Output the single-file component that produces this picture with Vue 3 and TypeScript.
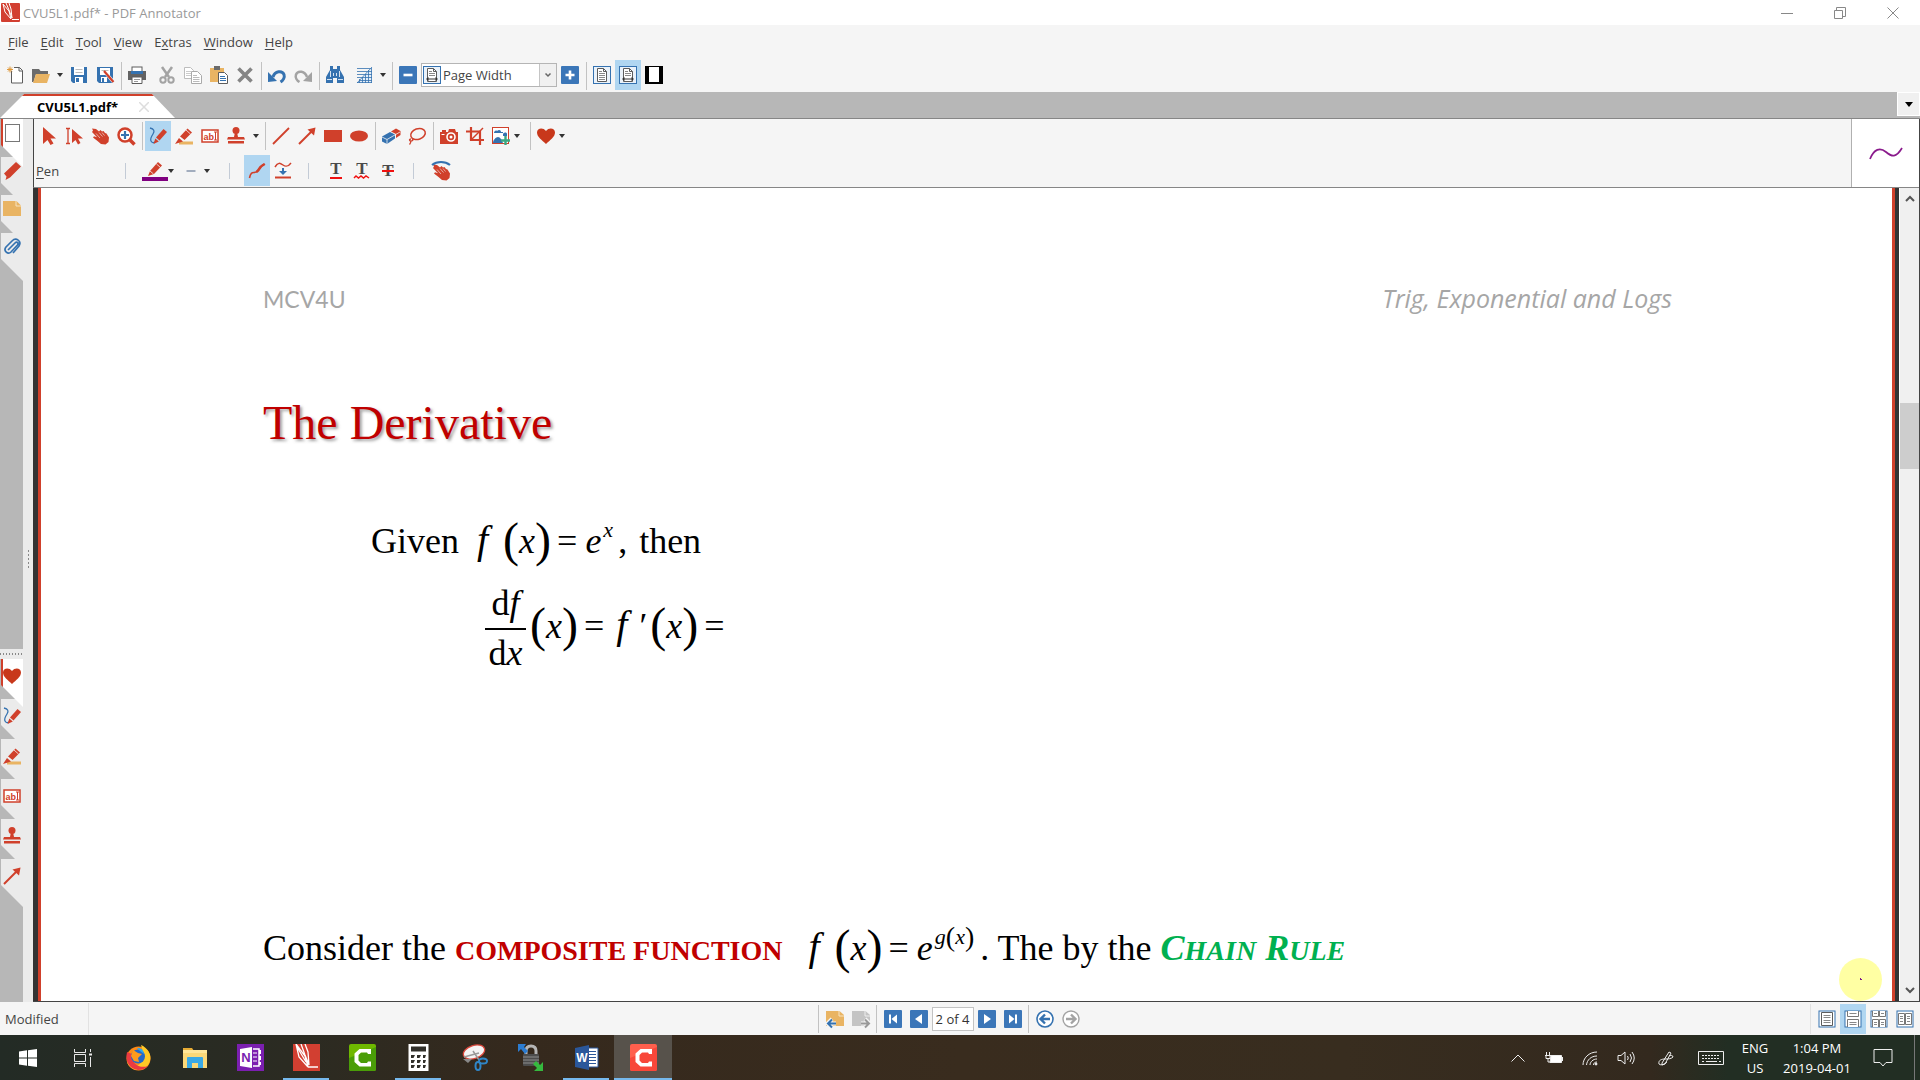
<script setup lang="ts">
import { ref } from 'vue'

interface Item {
  kind: 'btn' | 'sep' | 'caret' | 'gap'
  icon?: string
  label?: string
  active?: boolean
  tight?: boolean
  width?: number
}

const R = '#d0402b'
const B = '#3572b0'
const D = '#5c5c5c'
const G = '#a3a3a3'

const pageFrame = `<rect x="1" y="1" width="16" height="16" fill="#fff" stroke="${B}" stroke-width="1"/>`
const smallPage = `<path d="M4.500 2.500h6l3 3v10h-9z" fill="#fff" stroke="${D}"/><path d="M10.500 2.500v3h3" fill="none" stroke="${D}"/>`
const penArt = `<path d="M7.500 11L14 3.500 17 6 10 13.500z" fill="${R}"/><path d="M15 2.500l1-1 2 1.500-1 1.500z" fill="${R}"/><path d="M6.800 12l2.600 2.200L5 16z" fill="${R}"/>`
const handArt = `<path d="M1 1.500L5 2l3 2.500L9.500 3 11 4.500 12.500 4l1.500 2 1.500.5 2.500 4-.5 4.500-3 2.500-4.500-.5L6.500 14 2 10.500l1-1.200 3 1L1 5l1-1.500z" fill="${R}"/><path d="M8 5.500l3.500 4M11 5.500l2.500 3M5 6.500l4 4.500" stroke="#f5f5f5" stroke-width=".6"/>`

const icons: Record<string, string> = {
  newdoc: `<path d="M5.500 5v12h11V4.500l-3-3H8" fill="#fff" stroke="${D}"/><path d="M13 1.500V5h3.500" fill="none" stroke="${D}"/><path d="M4 .5v6M1 3.500h6M2 1.500l4 4M6 1.500l-4 4" stroke="#e0993b"/>`,
  open: `<path d="M0 3h7l1.500 2H16v3H4L1.500 16H0z" fill="#6b6b6b"/><path d="M4 8h14l-3 9H1z" fill="#e9b463"/>`,
  save: `<path d="M1 1h16v16H3l-2-2z" fill="${B}"/><rect x="4" y="1" width="10" height="8" fill="#fff"/><path d="M5.500 3.500h7M5.500 6.500h7" stroke="#bbb"/><rect x="5" y="11" width="8" height="6" fill="#fff"/><rect x="6" y="12" width="3" height="4" fill="${B}"/>`,
  saveas: `<path d="M1 1h16v16H3l-2-2z" fill="${B}"/><rect x="4" y="2" width="10" height="7" fill="#fff"/><path d="M5.500 4.500h7" stroke="#bbb"/><rect x="5" y="11" width="6" height="5" fill="#fff"/><rect x="6" y="12" width="2" height="4" fill="${B}"/><path d="M9 6l8.500 10" stroke="#f5f5f5" stroke-width="3.400"/><path d="M8 5l9.500 11" stroke="${R}" stroke-width="2.200"/>`,
  print: `<rect x="4" y="1" width="10" height="5" fill="#fff" stroke="${D}"/><path d="M0 5h18v9H0z" fill="#636363"/><rect x="3" y="5" width="12" height="3" fill="${B}"/><path d="M4 11h10v6.500H4z" fill="#fff" stroke="${D}"/><path d="M6 13.500h6M6 15.500h4" stroke="#999"/>`,
  cut: `<path d="M4 1l7 10M14 1L7 11" stroke="${G}" stroke-width="2.500" fill="none"/><circle cx="5" cy="14" r="2.700" fill="none" stroke="${G}" stroke-width="2"/><circle cx="13" cy="14" r="2.700" fill="none" stroke="${G}" stroke-width="2"/>`,
  copy: `<path d="M.5 1.500h6l3 3v8h-9z" fill="#fff" stroke="#bdbdbd"/><path d="M2 5.500h5M2 7.500h5M2 9.500h5" stroke="#ccc"/><path d="M7.500 5.500h6l4 4v8h-10z" fill="#fff" stroke="#aaa"/><path d="M9 9.500h4M9 11.500h6.500M9 13.500h6.500M9 15.500h6.500" stroke="#bbb"/>`,
  paste: `<rect x="0" y="2" width="14" height="14" fill="#e9b463"/><rect x="4" y="0" width="6" height="4" fill="#6b6b6b"/><path d="M8.500 6.500h6l3 3v8h-9z" fill="#fff" stroke="${D}"/><path d="M10 10.500h5M10 12.500h6M10 14.500h6" stroke="${B}"/>`,
  del: `<path d="M2.500 2.500l13 13M15.500 2.500l-13 13" stroke="#858585" stroke-width="3.600"/>`,
  undo: `<path d="M5 11c2-6 9-7 11-2.500 1 3-1 6-3.500 7.500" fill="none" stroke="${B}" stroke-width="3"/><path d="M0 6v10l9-1z" fill="${B}"/>`,
  redo: `<path d="M13 11C11 5 4 4 2 8.500c-1 3 1 6 3.500 7.500" fill="none" stroke="${G}" stroke-width="2.500"/><path d="M18 6v10l-9-1z" fill="${G}"/>`,
  find: `<path d="M4 0h3v3h4V0h3v4l4 7v6h-7v-5H7v5H0v-6l4-7z" fill="${B}"/><path d="M4.500 5v6M13.500 5v6M7.500 7v3M10.500 7v3" stroke="#fff" stroke-width=".8"/><path d="M1 13.500h5M12 13.500h5" stroke="#cfe0f0"/>`,
  grid: `<path d="M2 2.500h14M2 5.500h11M2 8.500h8M2 11.500h5" stroke="${B}" stroke-width=".8"/><path d="M17 1v16H2z" fill="#e4eef8"/><path d="M2 16.500h15M4 14.500h13M7 11.500h10M10 8.500h7M13 5.500h4M16.500 2v15M13.500 4v13M10.500 8v9M7.500 11v6M4.500 13v4M17 1L2 17" stroke="${B}" stroke-width=".8"/>`,
  minus: `<rect x="0" y="0" width="18" height="18" rx="1" fill="#3b76b8"/><path d="M4.500 9h9" stroke="#fff" stroke-width="2.600"/>`,
  plus: `<rect x="0" y="0" width="18" height="18" rx="1" fill="#3b76b8"/><path d="M4.500 9h9M9 4.500v9" stroke="#fff" stroke-width="2.600"/>`,
  pagewidth: `<rect x=".5" y=".5" width="17" height="17" fill="#eaf2fa" stroke="${B}"/>${smallPage}<path d="M6 5.500h3M6 7.500h6M6 9.500h6" stroke="#888"/><path d="M4 13h10" stroke="#333"/><path d="M3 13l2.500-2v4zM15 13l-2.500-2v4z" fill="#333"/>`,
  pagefull: `<rect x=".5" y=".5" width="17" height="17" fill="#eaf2fa" stroke="${B}"/>${smallPage}<path d="M6 5.500h3M6 7.500h6M6 9.500h6M6 11.500h6M6 13.500h6" stroke="#888"/>`,
  fullscreen: `<rect x="0" y="0" width="18" height="18" fill="#000"/><rect x="4" y="1" width="10" height="15" fill="#fff"/>`,
  cursor: `<path d="M4 0v17l4.500-4 3 5 3-1.500-3-5H17z" fill="${R}"/>`,
  textcursor: `<path d="M1 1.500h1.500l.5.500.5-.5H5M3 2v14M1 16.500h1.500l.5-.5.5.5H5" stroke="${R}" fill="none" stroke-width="1.300"/><path d="M7 2v14l3.500-3 2.500 4.500 2.500-1.500-2.500-4.500H18z" fill="${R}"/>`,
  hand: handArt,
  zoom: `<circle cx="8" cy="8" r="6.500" fill="#fff" stroke="${R}" stroke-width="2.500"/><path d="M12.500 12.500l5 5" stroke="${R}" stroke-width="3.500"/><path d="M4 8h8M8 4v8" stroke="${B}" stroke-width="2.200"/>`,
  pen: `<path d="M1 1c4 1 5 3 3 6-2 3-3 5-2 7 1 2 3 2 4 1" fill="none" stroke="${B}" stroke-width="1.300"/><path d="M7 10.500L14.500 2 18 5l-7.500 8.500z" fill="${R}"/><path d="M6.300 11.500l3.500 3L4.500 17z" fill="${R}"/>`,
  marker: `<rect x="4" y="14.500" width="14" height="3" fill="#e9b463"/><path d="M5 9.500L12.500 1.500 17 5.500 9.500 13z" fill="${R}"/><path d="M4 11l4 3.500L0 17z" fill="${R}"/><path d="M11 3l4.500 4M5 10l4 3.500" stroke="#f5f5f5" stroke-width=".8"/>`,
  textbox: `<rect x="1" y="3" width="16" height="12" fill="#fff" stroke="${R}" stroke-width="1.500"/><text x="2.500" y="12.500" font-family="Liberation Sans" font-size="9" font-weight="bold" fill="${R}">ab</text><path d="M13 5h3M13 13h3M14.500 5v8" stroke="${R}"/>`,
  stamp: `<circle cx="9" cy="3.500" r="3.500" fill="${R}"/><path d="M7.800 6h2.400l.8 4h6l1 2.500H0L1 10h6z" fill="${R}"/><rect x="1" y="14" width="16" height="2.500" fill="${R}"/>`,
  line: `<path d="M1 17L17 1" stroke="${R}" stroke-width="1.800"/>`,
  arrow: `<path d="M1 17L14 4" stroke="${R}" stroke-width="2"/><path d="M17.500.5l-1.500 8-6.500-6z" fill="${R}"/>`,
  rect: `<rect x="0" y="3" width="18" height="12" fill="${R}"/>`,
  ellipse: `<ellipse cx="9" cy="9" rx="9" ry="5.500" fill="${R}"/>`,
  eraser: `<path d="M0 9.500l8-4.500 5 2.500v4L5 17l-5-2.500z" fill="${B}"/><path d="M9 4.500l5-3L18.500 4v4L14 11V7z" fill="${R}"/><path d="M0 10l5 2.500L18 5M5 12.500V17" stroke="#f5f5f5" stroke-width=".8" fill="none"/>`,
  lasso: `<ellipse cx="10" cy="7" rx="7.500" ry="5.300" transform="rotate(-20 10 7)" fill="none" stroke="${R}" stroke-width="1.500"/><path d="M3 12c-2 0-2 2 0 2s3-2 1-2M2.500 14c1 1 0 2-1 3.500" fill="none" stroke="${R}" stroke-width="1.300"/>`,
  camera: `<path d="M0 5h2V3h4v2h2l1-3h6l1 3h2v12H0z" fill="${R}"/><circle cx="11" cy="10" r="4" fill="${R}" stroke="#fff" stroke-width="1.600"/><circle cx="11" cy="10" r="1.500" fill="#fff"/><path d="M1.500 7.500h3" stroke="#fff"/>`,
  crop: `<path d="M5 0v13h13M0 4.500h14V18" fill="none" stroke="${R}" stroke-width="2.200"/><path d="M5 13L17 1" stroke="${R}" stroke-width="1.500"/>`,
  image: `<rect x=".5" y=".5" width="16" height="16" fill="#fff" stroke="${R}"/><path d="M2 6c0-2 2-3 3-2 2-2 4-1 4 1h2v1zM1 16c0-3 3-6 5-6s4 3 5 6zM11 7c1-2 4-2 4 0v2h-4z" fill="${B}"/><path d="M13.500 9v9M9 13.500h9" stroke="#3aa882" stroke-width="2.400"/>`,
  heart: `<path d="M9 17C5 13 0 10 0 5.500 0 1 6 0 9 4c3-4 9-3 9 1.500C18 10 13 13 9 17z" fill="#c8381b"/>`,
  penline: `<path d="M2 14l2-5L12 0l4 3.500L8 12z" fill="${R}"/><path d="M4 9l3.500 3M10.500 2l4 3.500" stroke="#f5f5f5" stroke-width=".8"/>`,
  dash: `<path d="M4.500 9h9" stroke="#6b7d99" stroke-width="1.200"/>`,
  smooth: `<path d="M1.500 16C3 8 6 12 9 9.500 12 7 11 5 16 2" fill="none" stroke="${R}" stroke-width="1.600"/><path d="M9 9.500c3-2.500 2-4.500 7-7" fill="none" stroke="${R}" stroke-width="2.500" stroke-linecap="round"/>`,
  flatten: `<path d="M1 5c3-5 5-4 8-2s5 2 8-2" fill="none" stroke="${R}" stroke-width="1.500"/><path d="M8 6h2v3h3l-4 4-4-4h3z" fill="${B}"/><path d="M1 15.500h16" stroke="${R}" stroke-width="2"/>`,
  tunder: `<text x="9" y="12" text-anchor="middle" font-family="Liberation Serif" font-size="17" font-weight="bold" fill="#4a4a4a">T</text><path d="M3 16h12" stroke="#f01010" stroke-width="2"/>`,
  twave: `<text x="9" y="12" text-anchor="middle" font-family="Liberation Serif" font-size="17" font-weight="bold" fill="#4a4a4a">T</text><path d="M1 16l2-2 2.500 2L8 14l2.500 2 2.500-2 3 2" fill="none" stroke="#f01010" stroke-width="1.500"/>`,
  tstrike: `<text x="9" y="14" text-anchor="middle" font-family="Liberation Serif" font-size="17" font-weight="bold" fill="#4a4a4a">T</text><path d="M3 9h12" stroke="#f01010" stroke-width="2"/>`,
  touch: `<g transform="translate(0 1)">${handArt}</g><path d="M0 3C5-1 13-1 18 3" fill="none" stroke="${B}" stroke-width="2.200"/>`,
  pageside: `<rect x="2.500" y=".5" width="14" height="17" fill="#fff" stroke="#777"/>`,
  pencilside: `<path d="M1 11.500L13 0l5 4.500L7 15.500 2.500 18l1-3.500z" fill="${R}"/>`,
  note: `<path d="M0 1h13.500L18 5.500V16H0z" fill="#e9b463"/><path d="M13 1v5h5" fill="none" stroke="#f7e3c0"/>`,
  clip: `<path d="M5 12l7-7c2-2 4 0 2.500 2L8 14c-3 3-8-1-5-5l6-6c4-4 10 0 7 5l-6 7" fill="none" stroke="${B}" stroke-width="1.700"/>`,
  noteback: `<path d="M0 1h13.500L18 5v11H0z" fill="#e9b463"/><path d="M13 1v5h5" fill="none" stroke="#f7e3c0"/><path d="M10 13.500H3M6 9l-4.500 4.500L6 18" stroke="#f5f5f5" stroke-width="4" fill="none"/><path d="M10 13.500H2M6 9.500l-4 4 4 4" stroke="${B}" stroke-width="2" fill="none"/>`,
  notefwd: `<path d="M0 1h13.500L18 5v11H0z" fill="#c4c4c4"/><path d="M13 1v5h5" fill="none" stroke="#eee"/><path d="M9 13.500h7M13 9l4.500 4.500L13 18" stroke="#f5f5f5" stroke-width="4" fill="none"/><path d="M9 13.500h8M13 9.500l4 4-4 4" stroke="#999" stroke-width="2" fill="none"/>`,
  first: `<rect width="18" height="18" rx="1" fill="#3b76b8"/><path d="M6 4.500v9" stroke="#fff" stroke-width="2"/><path d="M13 4.500v9L7.500 9z" fill="#fff"/>`,
  prev: `<rect width="18" height="18" rx="1" fill="#3b76b8"/><path d="M12 4v10L5 9z" fill="#fff"/>`,
  next: `<rect width="18" height="18" rx="1" fill="#3b76b8"/><path d="M6 4v10l7-5z" fill="#fff"/>`,
  last: `<rect width="18" height="18" rx="1" fill="#3b76b8"/><path d="M12 4.500v9" stroke="#fff" stroke-width="2"/><path d="M5 4.500v9L10.500 9z" fill="#fff"/>`,
  back: `<circle cx="9" cy="9" r="8" fill="#fff" stroke="${B}" stroke-width="1.600"/><path d="M14 9H5M9 4.500L4.500 9 9 13.500" fill="none" stroke="${B}" stroke-width="2.400"/>`,
  forward: `<circle cx="9" cy="9" r="8" fill="#fff" stroke="${G}" stroke-width="1.400"/><path d="M4 9h9M9 4.500L13.500 9 9 13.500" fill="none" stroke="${G}" stroke-width="2.400"/>`,
  view1: `${pageFrame}<path d="M3.500 2.500h11v13h-11z" fill="#fff" stroke="${D}"/><path d="M5.500 5.500h7M5.500 7.500h7M5.500 10.500h7M5.500 12.500h7" stroke="#888"/>`,
  view2: `${pageFrame}<path d="M3.500 1v5.500h11V1M3.500 17V9.500h11V17" fill="#fff" stroke="#777"/><path d="M5.500 3.500h7M5.500 12.500h7M5.500 14.500h7" stroke="#888"/>`,
  view3: `${pageFrame}<path d="M2.500 1v5.500h6V1M9.500 1v5.500h6V1M2.500 17V9.500h6V17M9.500 17V9.500h6V17" fill="#fff" stroke="#777"/><path d="M4 3.500h3M11 3.500h3M4 12.500h3M11 12.500h3M4 14.500h3M11 14.500h3" stroke="#888"/>`,
  view4: `${pageFrame}<path d="M2.500 3.500h6v11h-6zM9.500 3.500h6v11h-6z" fill="#fff" stroke="#777"/><path d="M4 6.500h3M11 6.500h3M4 8.500h3M11 8.500h3M4 11.500h3M11 11.500h3" stroke="#888"/>`,
}

const btn = (icon: string, label: string, active = false): Item => ({ kind: 'btn', icon, label, active })
const sep: Item = { kind: 'sep' }
const caret = (label: string, tight = false): Item => ({ kind: 'caret', label, tight })
const gap = (width: number): Item => ({ kind: 'gap', width })

const fileTools: Item[] = [
  btn('newdoc', 'New'), btn('open', 'Open'), caret('Recent files'), btn('save', 'Save'), btn('saveas', 'Save as'), sep,
  btn('print', 'Print'), gap(4), btn('cut', 'Cut'), btn('copy', 'Copy'), btn('paste', 'Paste'), btn('del', 'Delete'), sep,
  btn('undo', 'Undo'), btn('redo', 'Redo'), sep,
  btn('find', 'Find'), gap(3), btn('grid', 'Grid'), caret('Grid options'), sep, btn('minus', 'Zoom out'),
]
const viewTools: Item[] = [
  btn('plus', 'Zoom in'), sep, btn('pagefull', 'Full page'), btn('pagewidth', 'Page width', true), btn('fullscreen', 'Full screen'),
]
const drawTools: Item[] = [
  btn('cursor', 'Select'), btn('textcursor', 'Select text'), btn('hand', 'Pan'), btn('zoom', 'Zoom'), sep,
  btn('pen', 'Pen', true), btn('marker', 'Marker'), btn('textbox', 'Text'), btn('stamp', 'Stamp'), caret('Stamps'), sep,
  btn('line', 'Line'), btn('arrow', 'Arrow'), btn('rect', 'Rectangle'), btn('ellipse', 'Ellipse'), sep,
  btn('eraser', 'Eraser'), btn('lasso', 'Lasso'), sep,
  btn('camera', 'Snapshot'), btn('crop', 'Crop'), btn('image', 'Insert image'), caret('Insert', true), sep,
  btn('heart', 'Favorites'), caret('Favorites list', true),
]
const penTools: Item[] = [
  gap(14), btn('penline', 'Colour'), caret('Colour list', true), btn('dash', 'Line width'), caret('Widths', true),
  gap(12), sep, gap(12), btn('smooth', 'Smooth', true), btn('flatten', 'Straighten'), gap(9), sep, gap(12),
  btn('tunder', 'Underline'), btn('twave', 'Squiggly'), btn('tstrike', 'Strike out'), gap(9), sep, gap(12), btn('touch', 'Touch'),
]
const menus = [
  ['', 'F', 'ile'], ['', 'E', 'dit'], ['', 'T', 'ool'], ['', 'V', 'iew'], ['E', 'x', 'tras'], ['', 'W', 'indow'], ['', 'H', 'elp'],
]
const upperTabs = ['pageside', 'pencilside', 'note', 'clip']
const lowerTabs = ['heart', 'pen', 'marker', 'textbox', 'stamp', 'arrow']
const viewModes: Item[] = [btn('view1', 'Single page'), btn('view2', 'Continuous', true), btn('view3', 'Two-up continuous'), btn('view4', 'Two pages')]
const navBefore: Item[] = [sep, btn('noteback', 'Previous note'), btn('notefwd', 'Next note'), sep, btn('first', 'First page'), btn('prev', 'Previous page')]
const navAfter: Item[] = [btn('next', 'Next page'), btn('last', 'Last page'), sep, btn('back', 'Back'), btn('forward', 'Forward')]

const camtasia = (a: string, b: string) =>
  `<rect width="27" height="27" rx="2" fill="${a}"/><path d="M0 14L27 3v22q0 2-2 2H2q-2 0-2-2z" fill="${b}"/><path d="M22 5v5h-3l-1-1.500h-6L9.500 11v5.500L12 19h6l1-1.500h3v5H10.500L5.500 18V9.500L10.500 5z" fill="#fff"/>`
const apps = [
  { name: 'Firefox', state: '', art: `<circle cx="13.500" cy="14.500" r="12" fill="#ff8a16"/><path d="M16 1c9 4 12 13 7 20-6 8-18 6-21-3 5 6 12 5 14 0 3-6 2-11 0-17z" fill="#ffc926"/><path d="M2 8c-2 9 2 17 11 18 5 0 8-2 10-4-8 3-17-2-16-12z" fill="#ec3a41"/><circle cx="13" cy="12.500" r="7" fill="#2468c9"/><path d="M8 6l5 3 4 1-4 4 1 4-5-1-3-5z" fill="#ff9a1d"/><path d="M12 4q6-1 7 6l-4-3z" fill="#29a7f2"/>` },
  { name: 'File Explorer', state: '', art: `<path d="M2 4h9l2 3h-11z" fill="#e7ac35"/><path d="M2 6h24v18H2z" fill="#fbd878"/><path d="M2 6h24v3H2z" fill="#ffe69a"/><path d="M6 24V14q0-1 1-1h14q1 0 1 1v10h-5v-5h-6v5z" fill="#3aa9e6"/>` },
  { name: 'OneNote', state: '', art: `<rect width="27" height="27" fill="#7b1fb0"/><path d="M16 5h6v17h-6" fill="none" stroke="#fff" stroke-width="1.500"/><path d="M22 6h2v4h-2zM22 12h2v4h-2zM22 18h2v3h-2z" fill="#fff"/><path d="M16 9h4M16 13h4M16 17h4" stroke="#fff"/><path d="M3 5l12-2v21L3 22z" fill="#fff"/><text x="9" y="18" font-size="13" font-weight="bold" font-family="Liberation Sans" text-anchor="middle" fill="#7b1fb0">N</text>` },
  { name: 'PDF Annotator', state: 'open', art: `<rect width="27" height="27" fill="#d23f31"/><path d="M3 0l3 13 9 10-3-11zM8 0l4 11 4 10-1-13-3-8M4 3l9 15" fill="none" stroke="#fff" stroke-width="1.300"/><path d="M15 23h10" stroke="#fff" stroke-width="1.500"/>` },
  { name: 'Camtasia', state: '', art: camtasia('#6fb800', '#4a9d08') },
  { name: 'Calculator', state: 'open', art: `<path d="M3.500 0h20v27h-20z" fill="#fff"/><path d="M6 2.500h15v5H6z" fill="#32302a"/><path d="M6 11h4L8.500 14H6zM12 11h4l-1.500 3H12zM18 11h3l-1 3h-2zM6 16h4l-1.500 3H6zM12 16h4l-1.500 3H12zM18 16h3l-1 3h-2zM6 21h4l-1.500 3H6zM12 21h4l-1.500 3H12zM18 21h3l-1 3h-2z" fill="#32302a"/>` },
  { name: 'Snipping Tool', state: '', art: `<ellipse cx="13" cy="8" rx="11" ry="6.500" transform="rotate(-18 13 8)" fill="#f4f4f4" stroke="#d9473b" stroke-width="1.300"/><path d="M12 7l6 9M3 13l15-4" stroke="#999" stroke-width="1.500"/><path d="M2 15h9l-4 4z" fill="#888"/><ellipse cx="22" cy="17" rx="4" ry="2.500" fill="none" stroke="#2f86c8" stroke-width="2"/><ellipse cx="17" cy="22" rx="2.500" ry="4" fill="none" stroke="#2f86c8" stroke-width="2"/>` },
  { name: 'Secure Transfer', state: '', art: `<path d="M9 12V7q0-5 5-5t5 5v5" fill="none" stroke="#b5b5b5" stroke-width="3"/><rect x="6" y="10" width="16" height="12" rx="1" fill="#4c4c4c"/><path d="M6 13h16M6 16h16M6 19h16" stroke="#8c8c8c"/><path d="M1 0h8L7 3l4 4-3 3-4-5-3 3z" fill="#2c7cd0"/><path d="M26 27h-9l3-3-4-4 3-3 4 4 3-3z" fill="#35b93e"/>` },
  { name: 'Word', state: 'open', art: `<path d="M14 4h11v19H14z" fill="#fff" stroke="#2b579a"/><path d="M15 7.500h8M15 10.500h8M15 13.500h8M15 16.500h8M15 19.500h8" stroke="#2b579a"/><path d="M2 4l14-3v25L2 23z" fill="#2b579a"/><text x="9" y="18" font-size="12" font-weight="bold" font-family="Liberation Sans" text-anchor="middle" fill="#fff">W</text>` },
  { name: 'Camtasia Recorder', state: 'front', art: camtasia('#ff5f4d', '#f8473a') },
]

const zoomMode = ref('Page Width')
const pageNo = ref('2 of 4')
</script>

<template>
  <div class="app">
    <header class="titlebar">
      <svg class="logo" viewBox="0 0 19 19" aria-hidden="true">
        <rect width="19" height="19" rx="1" fill="#d23f31" />
        <path d="M2 1l2 8 6 7-2-8zM5 0l3 7 3 8-1-9-2-6" fill="none" stroke="#fff" />
        <path d="M11 16.500h7" stroke="#fff" />
      </svg>
      <span class="title">CVU5L1.pdf* - PDF Annotator</span>
      <div class="winctl">
        <button aria-label="Minimize"><svg viewBox="0 0 12 12"><path d="M0 6.500h12" /></svg></button>
        <button aria-label="Restore"><svg viewBox="0 0 12 12"><path d="M.5 3.500h8v8h-8zM2.500 3V.500h9v9H9" /></svg></button>
        <button aria-label="Close"><svg viewBox="0 0 12 12"><path d="M.5.5l11 11M11.500.5l-11 11" /></svg></button>
      </div>
    </header>

    <nav class="menubar">
      <button v-for="m in menus" :key="m.join('')">{{ m[0] }}<u>{{ m[1] }}</u>{{ m[2] }}</button>
    </nav>

    <div class="toolbar">
      <template v-for="(t, i) in fileTools" :key="i">
        <button v-if="t.kind === 'btn'" class="tool" :aria-label="t.label"><svg viewBox="0 0 18 18" v-html="icons[t.icon!]" /></button>
        <button v-else-if="t.kind === 'caret'" class="caret" :aria-label="t.label"></button>
        <i v-else-if="t.kind === 'sep'" class="sep"></i>
        <i v-else :style="{ width: t.width + 'px' }"></i>
      </template>
      <label class="combo">
        <svg viewBox="0 0 18 18" v-html="icons.pagewidth" />
        <select v-model="zoomMode" aria-label="Zoom">
          <option>Page Width</option>
          <option>Full Page</option>
        </select>
        <svg class="chev" viewBox="0 0 16 22"><path d="M5.500 9.500L8 12l2.500-2.500" fill="none" stroke="#666" stroke-width="1.500" /></svg>
      </label>
      <template v-for="(t, i) in viewTools" :key="i">
        <button v-if="t.kind === 'btn'" class="tool" :class="{ on: t.active }" :aria-label="t.label"><svg viewBox="0 0 18 18" v-html="icons[t.icon!]" /></button>
        <i v-else class="sep"></i>
      </template>
    </div>

    <div class="tabstrip">
      <div class="tab">
        <span>CVU5L1.pdf*</span>
        <button aria-label="Close tab"><svg viewBox="0 0 10 10"><path d="M0 0l10 10M10 0L0 10" stroke="#ddd" stroke-width="1.500" /></svg></button>
      </div>
      <button class="tablist" aria-label="Documents"></button>
    </div>

    <div class="work">
      <aside class="side">
        <div class="sidetabs upper">
          <button v-for="(t, i) in upperTabs" :key="t" :class="{ on: i === 0 }" :aria-label="t"><svg viewBox="0 0 18 18" v-html="icons[t]" /></button>
        </div>
        <div class="filler"></div>
        <div class="grip"></div>
        <div class="sidetabs lower">
          <button v-for="(t, i) in lowerTabs" :key="t" :class="{ on: i === 0 }" :aria-label="t"><svg viewBox="0 0 18 18" v-html="icons[t]" /></button>
        </div>
        <div class="splitter"></div>
      </aside>

      <section class="main">
        <div class="annobar">
          <div class="rows">
            <div class="row">
              <template v-for="(t, i) in drawTools" :key="i">
                <button v-if="t.kind === 'btn'" class="tool" :class="{ on: t.active }" :aria-label="t.label"><svg viewBox="0 0 18 18" v-html="icons[t.icon!]" /></button>
                <button v-else-if="t.kind === 'caret'" class="caret" :class="{ tight: t.tight }" :aria-label="t.label"></button>
                <i v-else class="sep"></i>
              </template>
            </div>
            <div class="row second">
              <span class="toolname"><u>P</u>en</span>
              <i class="sep"></i>
              <template v-for="(t, i) in penTools" :key="i">
                <button v-if="t.kind === 'btn'" class="tool" :class="{ on: t.active, swatch: t.icon === 'penline' }" :aria-label="t.label"><svg viewBox="0 0 18 18" v-html="icons[t.icon!]" /></button>
                <button v-else-if="t.kind === 'caret'" class="caret" :class="{ tight: t.tight }" :aria-label="t.label"></button>
                <i v-else-if="t.kind === 'sep'" class="sep"></i>
                <i v-else :style="{ width: t.width + 'px' }"></i>
              </template>
            </div>
          </div>
          <div class="preview"><svg viewBox="0 0 34 14"><path d="M1 13C5 3 11 1 17 6c6 5 10 6 16-4" fill="none" stroke="#8a1a8c" stroke-width="1.700" /></svg></div>
        </div>

        <div class="docarea">
          <article class="page">
            <header class="runhead"><span>MCV4U</span><em>Trig, Exponential and Logs</em></header>
            <h1>The Derivative</h1>
            <p class="given">Given<i class="fn lead">f</i><b class="par">(</b><i>x</i><b class="par">)</b><span class="eq">=</span><i>e</i><i class="sup">x</i><span class="comma">,</span><span class="then">then</span></p>
            <div class="deriv">
              <div class="frac"><span>d<i>f</i></span><span>d<i>x</i></span></div>
              <p><b class="par">(</b><i>x</i><b class="par">)</b><span class="eq">=</span><i class="fp">f</i><span class="prime">′</span><b class="par">(</b><i>x</i><b class="par">)</b><span class="eq">=</span></p>
            </div>
            <p class="consider">Consider the <strong>COMPOSITE FUNCTION</strong><i class="fn wide">f</i><b class="par">(</b><i>x</i><b class="par">)</b><span class="eq">=</span><i>e</i><span class="sup"><i>g</i><b class="spar">(</b><i>x</i><b class="spar">)</b></span><span class="dot">.</span> The by the <em class="chain">C<small>HAIN</small> R<small>ULE</small></em></p>
          </article>
          <div class="scroll">
            <button aria-label="Scroll up"><svg viewBox="0 0 10 8"><path d="M1 6l4-4 4 4" /></svg></button>
            <div class="track"><i class="before"></i><i class="thumb"></i><i class="after"></i></div>
            <button aria-label="Scroll down"><svg viewBox="0 0 10 8"><path d="M1 2l4 4 4-4" /></svg></button>
          </div>
          <div class="pointer"></div>
        </div>
      </section>
    </div>

    <footer class="status">
      <span class="state">Modified</span>
      <div class="grow"></div>
      <template v-for="(t, i) in navBefore" :key="i">
        <button v-if="t.kind === 'btn'" class="tool" :aria-label="t.label"><svg viewBox="0 0 18 18" v-html="icons[t.icon!]" /></button>
        <i v-else class="sep"></i>
      </template>
      <input v-model="pageNo" class="pageno" aria-label="Page" />
      <template v-for="(t, i) in navAfter" :key="i">
        <button v-if="t.kind === 'btn'" class="tool" :aria-label="t.label"><svg viewBox="0 0 18 18" v-html="icons[t.icon!]" /></button>
        <i v-else class="sep"></i>
      </template>
      <div class="grow"></div>
      <div class="modes">
        <button v-for="t in viewModes" :key="t.icon" class="tool" :class="{ on: t.active }" :aria-label="t.label"><svg viewBox="0 0 18 18" v-html="icons[t.icon!]" /></button>
      </div>
    </footer>

    <div class="taskbar">
      <button class="start" aria-label="Start"><svg width="18" height="18" viewBox="0 0 18 18"><path d="M0 2.500l8-1.200v7.200H0zM9 1.200L18 0v8.500H9zM0 9.500h8v7.200L0 15.500zM9 9.500h9V18l-9-1.300z" fill="#fff" /></svg></button>
      <button class="start" aria-label="Task View"><svg width="20" height="18" viewBox="0 0 20 18" fill="none" stroke="#e8e8e8"><path d="M1.500 0v3.500h11V0M1.500 18v-3.500h11V18M1.500 5.500h11v7h-11zM17.500 0v3M17.500 8v10" /><path d="M16 5.500h3" stroke-width="2" /></svg></button>
      <button v-for="a in apps" :key="a.name" class="appbtn" :class="a.state" :aria-label="a.name"><svg width="27" height="27" viewBox="0 0 27 27" v-html="a.art" /></button>
      <div class="grow"></div>
      <div class="tray">
        <button aria-label="Hidden icons"><svg width="16" height="16" viewBox="0 0 16 16"><path d="M1.500 11.500L8 5l6.500 6.500" /></svg></button>
        <button aria-label="Battery"><svg width="18" height="16" viewBox="0 0 18 16"><path d="M6 5.500h10.500v7H5z" fill="#fff" /><path d="M17.500 7v4M1.500 2v3M4.500 2v3M0 5.500h6M1 6v2.500h4V6M3 9v3h3" /></svg></button>
        <button aria-label="Network"><svg width="16" height="16" viewBox="0 0 16 16"><path d="M1 15C1 8 7 2 15 2M4.500 15C5 10 9 6 15 6M8 15c0-3 3-6 7-6M11.500 15c0-2 1.500-3 3.500-3" /><circle cx="14" cy="14" r="1" fill="#fff" /></svg></button>
        <button aria-label="Volume"><svg width="18" height="16" viewBox="0 0 18 16"><path d="M1 5.500h3l4-3.500v12l-4-3.500H1zM10.500 6q1.500 2 0 4M13 4q3 4 0 8M15 2q4.500 6 0 12" /></svg></button>
        <button class="pen" aria-label="Pen workspace"><svg width="16" height="16" viewBox="0 0 16 16"><path d="M4 13l7-11 2 1-6 11-3 1zM1 14c-1-4 3-5 6-5s6 0 8-2c0-2-3-2-4-1M1 14c2 2 6 0 8-2" /></svg></button>
        <button class="kbd" aria-label="Touch keyboard"><svg width="26" height="16" viewBox="0 0 26 16"><path d="M.5 1.500h25v13H.5z" /><path d="M4 5.500h18M4 8.500h18" stroke-dasharray="2 1" /><path d="M4 11.500h2M8 11.500h11M21 11.500h2" /></svg></button>
        <button class="lang"><span>ENG</span><span>US</span></button>
        <button class="clock"><span>1:04 PM</span><span>2019-04-01</span></button>
        <button class="notif" aria-label="Notifications"><svg width="20" height="20" viewBox="0 0 20 20"><path d="M1 1.500h18v13h-6l-3 3.500-3-3.500H1z" /></svg></button>
        <i class="desk"></i>
      </div>
    </div>
  </div>
</template>

<style>
body { margin: 0; }
</style>

<style scoped>
.app { min-height: 100vh; display: flex; flex-direction: column; background: #f5f5f5; font-family: "Open Sans", "Noto Sans", sans-serif; font-size: 13px; color: #444; overflow: hidden; }
button { border: 0; padding: 0; margin: 0; background: none; font: inherit; color: inherit; display: flex; align-items: center; justify-content: center; flex: none; }
u { text-underline-offset: 2px; }
.grow { flex: 1; }

.titlebar { height: 25px; background: #fff; display: flex; align-items: center; padding: 0 1px; }
.logo { width: 19px; height: 19px; }
.title { margin-left: 3px; flex: 1; color: #999; line-height: 20px; }
.winctl { display: flex; }
.winctl button { width: 53px; height: 25px; }
.winctl svg { width: 12px; height: 12px; fill: none; stroke: #888; overflow: visible; }

.menubar { height: 33px; padding-bottom: 2px; display: flex; align-items: center; gap: 12px; padding-left: 8px; }
.menubar button { display: block; line-height: 20px; }

.toolbar { height: 32px; display: flex; align-items: flex-start; padding-left: 2px; box-sizing: border-box; }
.tool { width: 26px; height: 30px; }
.tool svg { width: 18px; height: 18px; overflow: visible; }
.tool.on { background: #b0d6f1; }
.sep { width: 6px; flex: none; align-self: stretch; background: linear-gradient(#c2c2c2, #c2c2c2) center / 1px 28px no-repeat; }
.caret { width: 12px; height: 30px; }
.caret::before { content: ""; border: 3px solid transparent; border-top: 4px solid #333; border-bottom: 0; }
.combo { width: 136px; height: 24px; margin-top: 3px; background: #fff; border: 1px solid #b5b5b5; box-sizing: border-box; display: flex; align-items: center; padding-left: 1px; }
.combo svg { width: 18px; height: 18px; flex: none; }
.combo select { appearance: none; border: 0; background: none; flex: 1; min-width: 0; padding: 0 0 0 2px; font: inherit; color: #444; }
.combo .chev { width: 16px; height: 22px; background: #f0f0f0; border-left: 1px solid #c5c5c5; }

.tabstrip { height: 27px; background: #b7b7b7; border-bottom: 1px solid #868686; box-sizing: border-box; display: flex; justify-content: space-between; align-items: flex-end; }
.tab { width: 175px; height: 24px; background: linear-gradient(#d0402b, #d0402b) top / 100% 2px no-repeat, #fff; clip-path: polygon(24px 0, 152px 0, 100% 100%, 0 100%); display: flex; align-items: center; padding: 1px 0 0 37px; box-sizing: border-box; font-weight: bold; color: #000; }
.tab span { width: 102px; }
.tab svg { width: 10px; height: 10px; }
.tablist { width: 23px; height: 24px; margin: 0 0 2px; background: #f0f0f0; border: 1px solid #fff; }
.tablist::before { content: ""; border: 4px solid transparent; border-top: 5px solid #000; border-bottom: 0; }

.work { flex: 1; display: flex; min-height: 0; }
.side { width: 33px; box-sizing: border-box; border-right: 10px solid #ebebeb; background: #b7b7b7; display: flex; flex-direction: column; position: relative; }
.sidetabs { display: flex; flex-direction: column; position: relative; }
.sidetabs button { position: relative; width: 23px; height: 38px; align-items: flex-start; padding: 5px 0 0 1px; box-sizing: border-box; }
.sidetabs button::before { content: ""; position: absolute; left: 1px; top: 0; width: 22px; height: 48px; background: #ebebeb; clip-path: polygon(0 0, 100% 0, 100% 100%, 0 26px); }
.sidetabs button.on { z-index: 1; }
.sidetabs button.on::before { background: linear-gradient(90deg, #d0402b 2px, #fff 2px); }
.sidetabs svg { position: relative; width: 18px; height: 18px; }
.lower { height: 343px; }
.lower button { height: 40px; padding-top: 8px; }
.filler { flex: 1; }
.grip { height: 10px; background: radial-gradient(circle, #888 1px, transparent 1px) 2px 3px / 3px 4px repeat-x, #ebebeb; }
.splitter { position: absolute; right: -7px; top: 430px; width: 3px; height: 20px; background: radial-gradient(circle, #888 1px, transparent 1px) 0 0 / 3px 4px; }

.main { flex: 1; min-width: 0; display: flex; flex-direction: column; border-right: 1px solid #444; }
.annobar { height: 69px; box-sizing: border-box; border-bottom: 1px solid #868686; border-left: 1px solid #444; display: flex; }
.rows { flex: 1; padding: 2px 0 0 1px; }
.row { display: flex; height: 30px; align-items: center; }
.row .caret { width: 13px; }
.row .tight { justify-content: flex-start; }
.second { margin-top: 4px; height: 31px; }
.second .tool { height: 31px; }
.second .tight { width: 10px; }
.second .sep { background: linear-gradient(#c3cbd6, #c3cbd6) center / 1px 16px no-repeat; }
.toolname { width: 86px; padding-left: 1px; line-height: 20px; }
.swatch { box-shadow: inset 0 -5px #f5f5f5, inset 0 -9px purple; }
.preview { width: 68px; box-sizing: border-box; border-left: 1px solid #b0b0b0; background: #fff; display: flex; align-items: center; justify-content: center; }
.preview svg { width: 34px; height: 14px; }

.docarea { flex: 1; display: flex; position: relative; background: #333; border-bottom: 1px solid #444; }
.page { flex: 1; margin: 0 4px 0 5px; border: solid #d0402b; border-width: 0 3px; background: #fff; padding: 92px 220px 0 222px; color: #000; font-family: "Liberation Serif", serif; font-size: 36px; line-height: 50px; box-sizing: border-box; }
.page p { margin: 0; white-space: nowrap; }
.runhead { display: flex; justify-content: space-between; align-items: baseline; height: 36px; font: 23px/36px Lato, sans-serif; color: #a6a6a6; }
.runhead em { font: italic 25px/36px "Open Sans", sans-serif; }
h1 { margin: 77px 0 0; font-size: 48px; line-height: 60px; font-weight: normal; color: #c00000; text-shadow: 2px 2px 3px #888c; }
.given { padding: 63px 0 0 108px; }
.page .par, .page .spar { font-size: 48px; font-weight: normal; line-height: 0; vertical-align: -3px; }
.page .spar { font-size: 28px; vertical-align: -2px; }
.fn, .fp { font-size: 40px; line-height: 0; }
.fn { margin-right: 15px; }
.lead { margin-left: 18px; }
.wide { margin-left: 26px; }
.eq { margin: 0 8px 0 6px; }
.sup { font-size: 22px; line-height: 0; vertical-align: 16px; margin-left: 2px; }
.comma { margin-left: 5px; }
.then { margin-left: 12px; }
.deriv { display: flex; align-items: center; gap: 4px; margin: 17px 0 0 222px; }
.deriv p { padding-bottom: 4px; }
.frac { display: flex; flex-direction: column; line-height: 40px; text-align: center; width: 41px; }
.frac span:first-child { border-bottom: 2px solid #000; padding-bottom: 5px; margin-bottom: 3px; }
.fp { margin-left: 4px; }
.prime { margin: 0 3px 0 12px; }
.consider { padding-top: 250px; }
.consider strong { font-size: 28px; color: #c00000; }
.dot { margin-left: 6px; }
.chain { font-weight: bold; color: #00b050; }
.chain small { font-size: 28px; }

.scroll { width: 19px; background: #f0f0f0; border-left: 1px solid #fff; display: flex; flex-direction: column; }
.scroll button { height: 22px; width: 19px; }
.scroll svg { width: 10px; height: 8px; fill: none; stroke: #555; stroke-width: 2; }
.track { flex: 1; display: flex; flex-direction: column; }
.before { flex: 193; }
.thumb { flex: 66; background: #cdcdcd; }
.after { flex: 510; }
.pointer { position: absolute; right: 37px; bottom: 0; width: 43px; height: 43px; border-radius: 50%; background: radial-gradient(circle, #7a1a8c 1px, #ffffa3 1px); }

.status { height: 33px; display: flex; align-items: center; background: #f5f5f5; }
.state { width: 89px; box-sizing: border-box; padding-left: 5px; border-right: 1px solid #e2e2e2; line-height: 32px; }
.pageno { width: 42px; height: 24px; box-sizing: border-box; border: 1px solid #c3c3c3; background: #fff; padding: 0; margin: 0; text-align: center; font: inherit; color: #333; }
.modes { display: flex; border-left: 1px solid #e2e2e2; padding: 0 2px 0 3px; }

.taskbar { height: 45px; display: flex; align-items: center; background: linear-gradient(90deg, #232b25 0%, #2b2b22 15%, #35291d 27%, #392c1e 50%, #382d1f 70%, #33291e 86%, #222e23 90%, #222e23 100%); color: #fff; }
.start { width: 55px; height: 45px; }
.appbtn { width: 56px; height: 45px; position: relative; }
.appbtn.front { width: 58px; background: #57524b; }
.open::after, .front::after { content: ""; position: absolute; left: 5px; right: 5px; bottom: 0; height: 2px; background: #76b9ed; }
.front::after { left: 0; right: 0; }
.tray { display: flex; align-items: center; }
.tray button { width: 36px; height: 45px; }
.tray svg { fill: none; stroke: #eee; stroke-width: 1; }
.tray .pen { width: 44px; }
.tray .kbd { width: 46px; }
.tray .lang { width: 42px; flex-direction: column; line-height: 20px; }
.tray .clock { width: 82px; flex-direction: column; line-height: 20px; }
.tray .notif { width: 49px; }
.desk { width: 5px; height: 45px; margin-left: 7px; border-left: 1px solid #777; }
</style>
